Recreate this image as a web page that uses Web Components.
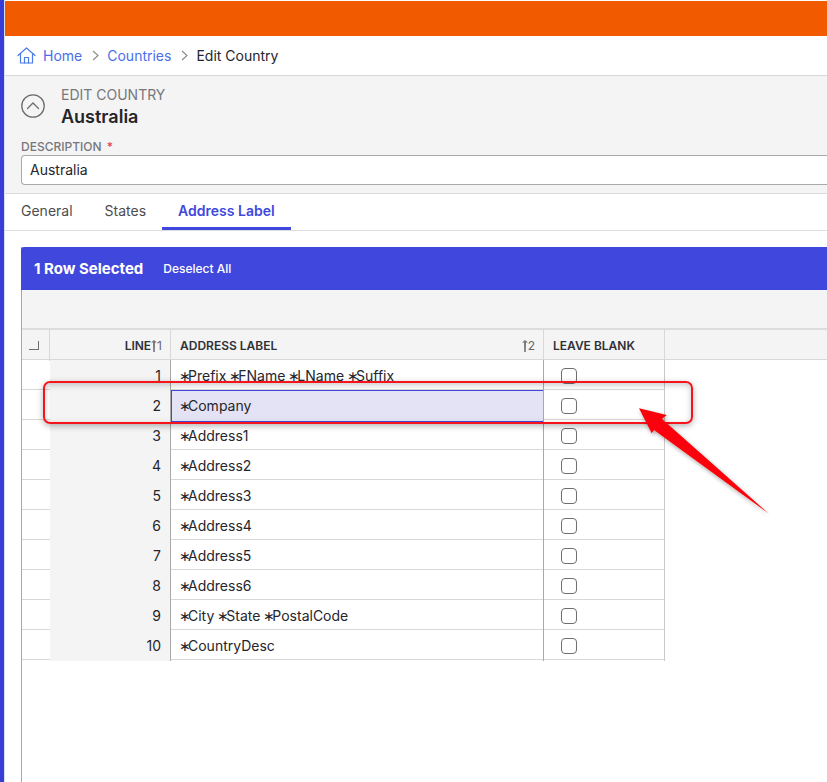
<!DOCTYPE html>
<html>
<head>
<meta charset="utf-8">
<style>
html, body { margin: 0; padding: 0; height: 100%; background: #fff; overflow: hidden; }
body { font-family: Inter, "Liberation Sans", sans-serif; color: #25252b; }
</style>
</head>
<body>
<app-shell>
  <app-breadcrumb></app-breadcrumb>
  <edit-header></edit-header>
  <tab-bar></tab-bar>
  <label-grid></label-grid>
</app-shell>
<script>
class AppShell extends HTMLElement {
    constructor() {
        super();
        this.attachShadow({mode: "open"}).innerHTML = `
        <style>
        :host {
            display: flex;
            position: relative;
            width: 827px;
            height: 782px;
            overflow: hidden;
        }
        .rail { width: 4px; background: #3a3dd5; border-right: 1px solid #d7e0f5; flex: none; }
        .main { flex: 1; min-width: 0; display: flex; flex-direction: column; }
        .top { height: 35px; margin-top: 1px; background: #f25a00; flex: none; }
        .callout {
            position: absolute; left: 43px; top: 381px; width: 646px; height: 39px;
            border: 2px solid #f5141c; border-radius: 7px;
            box-shadow: 0 2px 6px rgba(0,0,0,.3), inset 0 2px 6px rgba(0,0,0,.22);
            pointer-events: none;
        }
        svg { position: absolute; left: 630px; top: 395px; overflow: visible; }
        </style>
        <div class="rail"></div>
        <div class="main">
            <div class="top"></div>
            <slot></slot>
        </div>
        <div class="callout"></div>
        <svg width="150" height="130" viewBox="0 0 150 130">
            <defs><filter id="s" x="-20%" y="-20%" width="140%" height="140%"><feDropShadow dx="1" dy="2" stdDeviation="2" flood-color="#000" flood-opacity=".35"/></filter></defs>
            <path d="M9 13.300 L36.700 20 L32 24 L138.300 118.300 L24 35 L21.700 38.300 Z" fill="#fb0007" filter="url(#s)"/>
        </svg>`;
    }
}

class AppBreadcrumb extends HTMLElement {
    constructor() {
        super();
        this.attachShadow({mode: "open"}).innerHTML = `
        <style>
        :host {
            display: flex; align-items: center; height: 40px; box-sizing: border-box;
            padding: 0 0 0 12px; border-bottom: 1px solid #d8d8d8; font-size: 14px; flex: none;
        }
        a { color: #4a6ee8; text-decoration: none; }
        svg { display: block; flex: none; }
        .home { margin-right: 7px; }
        .sep { margin: 0 8px 0 10px; }
        </style>
        <svg class="home" width="19" height="19" viewBox="0 0 19 19" fill="none" stroke="#4a7be8" stroke-width="1.200" stroke-linejoin="round" stroke-linecap="round">
            <path d="M1 9.500 L9.500 2 L18 9.500"/><path d="M3.500 8 V17 H15.500 V8"/><path d="M7.500 17 V11.500 H11.500 V17"/>
        </svg>
        <a>Home</a>
        <svg class="sep" width="7" height="11" viewBox="0 0 7 11" fill="none" stroke="#8a8a8a" stroke-width="1.100"><path d="M1 1 L6 5.500 L1 10"/></svg>
        <a>Countries</a>
        <svg class="sep" width="7" height="11" viewBox="0 0 7 11" fill="none" stroke="#8a8a8a" stroke-width="1.100"><path d="M1 1 L6 5.500 L1 10"/></svg>
        <span>Edit Country</span>`;
    }
}

class EditHeader extends HTMLElement {
    constructor() {
        super();
        this.attachShadow({mode: "open"}).innerHTML = `
        <style>
        :host {
            display: block; height: 118px; box-sizing: border-box; background: #f4f4f4;
            border-bottom: 1px solid #dcdcdc; padding: 9px 0 0 16px; flex: none;
        }
        .head { display: flex; align-items: center; gap: 16px; height: 42px; }
        svg { display: block; flex: none; }
        .titles { padding-top: 2px; }
        .over { font-size: 14px; line-height: 17px; color: #77777c; }
        h1 { margin: 3px 0 0; font-size: 18px; line-height: 22px; font-weight: 600; color: #25252b; }
        label { display: block; margin-top: 12px; font-size: 12px; line-height: 15px; font-weight: 500; color: #77777c; }
        label span { color: #ef4444; margin-left: 2px; }
        .input {
            margin-top: 1px; height: 30px; box-sizing: border-box; border: 1px solid #a9a9a9; border-right: 0;
            border-radius: 4px 0 0 4px; background: #fff; padding-left: 8px; font-size: 14px; line-height: 28px;
        }
        </style>
        <div class="head">
            <svg width="24" height="24" viewBox="0 0 24 24" fill="none" stroke="#6d6d6d" stroke-width="1.300">
                <circle cx="12" cy="12" r="11.200"/><path d="M6.500 14.500 L12 9 L17.500 14.500" stroke-linecap="round"/>
            </svg>
            <div class="titles">
                <div class="over">EDIT COUNTRY</div>
                <h1>Australia</h1>
            </div>
        </div>
        <label>DESCRIPTION <span>*</span></label>
        <div class="input">Australia</div>`;
    }
}

class TabBar extends HTMLElement {
    constructor() {
        super();
        this.attachShadow({mode: "open"}).innerHTML = `
        <style>
        :host {
            display: flex; height: 37px; box-sizing: border-box; border-bottom: 1px solid #dcdcdc;
            font-size: 14px; flex: none;
        }
        div { padding: 0 16px; line-height: 34px; color: #4c4c50; height: 36px; box-sizing: border-box; }
        .on { color: #4047dd; font-weight: 600; border-bottom: 3px solid #4047dd; }
        </style>
        <div>General</div><div>States</div><div class="on">Address Label</div>`;
    }
}

class LabelRow extends HTMLElement {
    connectedCallback() {
        const on = this.hasAttribute("selected");
        const label = this.getAttribute("label").replace(/∗/g, "<s>∗</s>");
        this.attachShadow({mode: "open"}).innerHTML = `
        <style>
        :host {
            display: grid; grid-template-columns: 28px 121px 373px 121px; height: 30px;
            box-sizing: border-box; border-bottom: 1px solid #d8d8d8; font-size: 14px; line-height: 31px; width: 643px;
        }
        .line { background: #f4f4f4; text-align: right; padding-right: 9px; border-right: 1px solid #a9a9a9; box-sizing: border-box; }
        .text { padding-left: 9px; box-sizing: border-box; }
        .text.on { background: #e4e3f5; outline: 1px solid #4047dd; outline-offset: -1px; margin-bottom: -1px; }
        s { text-decoration: none; letter-spacing: -3px; margin-left: -1px; }
        .box { border-left: 1px solid #a9a9a9; border-right: 1px solid #c9c9c9; margin-left: -1px; padding: 8px 0 0 17px; box-sizing: border-box; }
        i { display: block; width: 14px; height: 14px; border: 1px solid #6f6f6f; border-radius: 4px; background: #fff; }
        </style>
        <div></div>
        <div class="line">${this.getAttribute("line")}</div>
        <div class="text${on ? " on" : ""}">${label}</div>
        <div class="box"><i></i></div>`;
    }
}

class LabelGrid extends HTMLElement {
    constructor() {
        super();
        const rows = ["∗Prefix ∗FName ∗LName ∗Suffix", "∗Company", "∗Address1", "∗Address2", "∗Address3", "∗Address4", "∗Address5", "∗Address6", "∗City ∗State ∗PostalCode", "∗CountryDesc"];
        const arrow = `<svg width="6" height="12" viewBox="0 0 6 12"><path d="M0 2.500 L3 0 L6 2.500 L4 2.500 L3.800 12 L2.200 12 L2 2.500 Z" fill="#77777c"/></svg>`;
        this.attachShadow({mode: "open"}).innerHTML = `
        <style>
        :host {
            display: block; flex: 1; margin: 16px 0 0 16px; border-left: 1px solid #a9a9a9;
            min-height: 0; position: relative;
        }
        .bar {
            height: 43px; background: #4047dd; color: #fff; display: flex; align-items: center;
            gap: 20px; border-radius: 3px 0 0 0; margin-left: -1px; padding-left: 13px;
        }
        b { font-size: 15px; font-weight: 700; }
        .bar span { font-size: 12px; font-weight: 500; }
        .tools { height: 38px; background: #f4f4f4; border-bottom: 2px solid #dcdcdc; }
        .cols {
            display: grid; grid-template-columns: 28px 121px 373px 121px 1fr; height: 30px; box-sizing: border-box;
            background: #f4f4f4; border-bottom: 1px solid #d8d8d8; font-size: 12px; font-weight: 600; line-height: 31px; color: #303036;
        }
        .cols > div { border-right: 1px solid #d8d8d8; box-sizing: border-box; }
        .cols > div:last-child { border: 0; }
        .corner { position: relative; }
        .corner i { position: absolute; left: 7px; top: 11px; width: 9px; height: 8px; border-right: 1px solid #6f6f6f; border-bottom: 1px solid #6f6f6f; }
        .lineh { display: flex; justify-content: flex-end; align-items: center; padding-right: 8px; }
        .addr { display: flex; justify-content: space-between; align-items: center; padding: 0 8px 0 9px; }
        .blank { padding-left: 9px; }
        .sort { font-weight: 400; color: #66666a; display: inline-flex; align-items: center; gap: 0; }
        .sort svg { display: block; }
        </style>
        <div class="bar"><b>1 Row Selected</b><span>Deselect All</span></div>
        <div class="tools"></div>
        <div class="cols">
            <div class="corner"><i></i></div>
            <div class="lineh">LINE<span class="sort">${arrow}1</span></div>
            <div class="addr"><span>ADDRESS LABEL</span><span class="sort">${arrow}2</span></div>
            <div class="blank">LEAVE BLANK</div>
            <div></div>
        </div>
        ${rows.map((r, i) => `<label-row line="${i + 1}" label="${r}"${i === 1 ? " selected" : ""}></label-row>`).join("")}`;
    }
}

customElements.define("app-shell", AppShell);
customElements.define("app-breadcrumb", AppBreadcrumb);
customElements.define("edit-header", EditHeader);
customElements.define("tab-bar", TabBar);
customElements.define("label-row", LabelRow);
customElements.define("label-grid", LabelGrid);
</script>
</body>
</html>
